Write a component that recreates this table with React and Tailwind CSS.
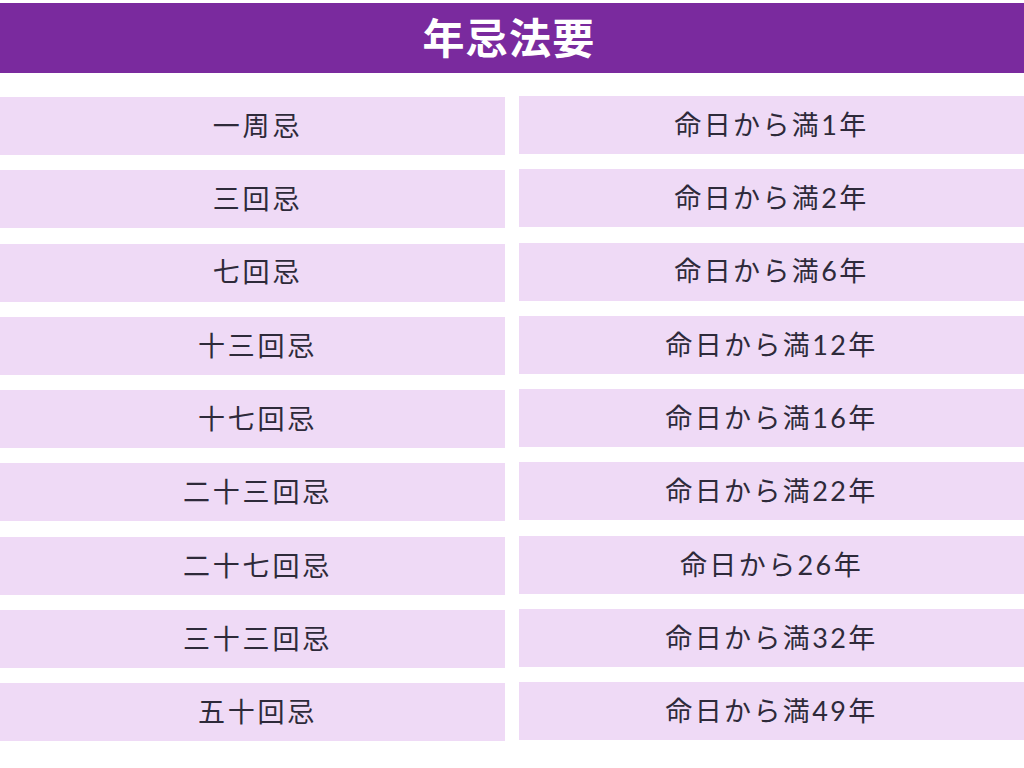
import React from 'react';

const rows = [
  ['一周忌', '命日から満1年'],
  ['三回忌', '命日から満2年'],
  ['七回忌', '命日から満6年'],
  ['十三回忌', '命日から満12年'],
  ['十七回忌', '命日から満16年'],
  ['二十三回忌', '命日から満22年'],
  ['二十七回忌', '命日から26年'],
  ['三十三回忌', '命日から満32年'],
  ['五十回忌', '命日から満49年'],
];

export default function App() {
  return (
    <div className="w-[1024px] h-[768px] bg-white pt-[3px] font-['Lato','Noto_Sans_CJK_JP',sans-serif]">
      <div className="h-[70px] bg-[#7a2a9e] flex items-center justify-center">
        <h1 className="text-white text-[42px] font-bold leading-none tracking-[1.2px] -ml-[6px]">年忌法要</h1>
      </div>
      <div className="mt-[24px] grid grid-cols-[505px_505px] gap-x-[14px] gap-y-[15.3px]">
        {rows.map(([name, desc]) => (
          <React.Fragment key={name}>
            <div className="h-[58px] pl-[10px] bg-[#efdaf6] flex items-center justify-center text-[27px] tracking-[2.8px] text-[#2e2a3a]">
              {name}
            </div>
            <div className="h-[58px] -mt-[1px] bg-[#efdaf6] flex items-center justify-center text-[27px] tracking-[2.4px] text-[#2e2a3a]">
              {desc}
            </div>
          </React.Fragment>
        ))}
      </div>
    </div>
  );
}
